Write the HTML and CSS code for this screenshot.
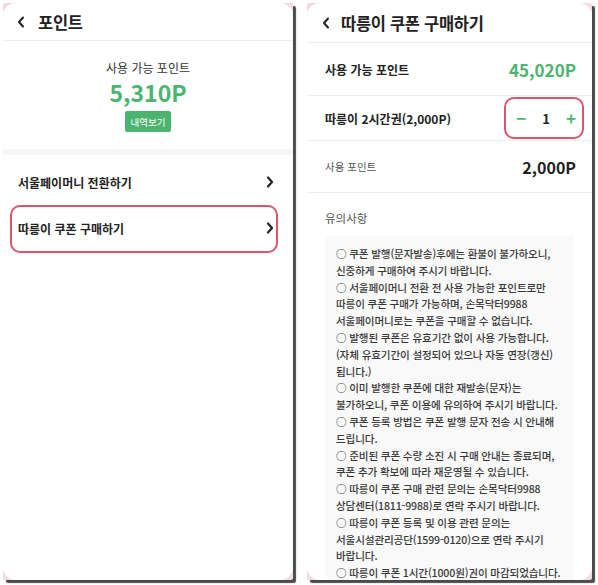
FILE: index.html
```html
<!DOCTYPE html>
<html lang="ko">
<head>
<meta charset="utf-8">
<link rel="stylesheet" href="styles.css">
</head>
<body>
<div class="stage">
  <div class="frame frame-left">
    <div class="card">
      <div class="header">
        <svg class="back" width="8" height="12" viewBox="0 0 8 12"><polyline points="6,1.5 2,6 6,10.5" fill="none" stroke="#222" stroke-width="2" stroke-linecap="round" stroke-linejoin="round"/></svg>
        <span class="title">포인트</span>
      </div>
      <div class="summary">
        <div class="summary-label">사용 가능 포인트</div>
        <div class="summary-value">5,310P</div>
        <div class="history-btn">내역보기</div>
      </div>
      <div class="band"></div>
      <div class="menu">
        <div class="menu-row">
          <span>서울페이머니 전환하기</span>
          <svg width="8" height="12" viewBox="0 0 8 12"><polyline points="2,1.5 6,6 2,10.5" fill="none" stroke="#222" stroke-width="2.2" stroke-linecap="round" stroke-linejoin="round"/></svg>
        </div>
        <div class="menu-row">
          <span>따릉이 쿠폰 구매하기</span>
          <svg width="8" height="12" viewBox="0 0 8 12"><polyline points="2,1.5 6,6 2,10.5" fill="none" stroke="#222" stroke-width="2.2" stroke-linecap="round" stroke-linejoin="round"/></svg>
          <div class="highlight hl-menu"></div>
        </div>
      </div>
    </div>
  </div>
  <div class="frame frame-right">
    <div class="card">
      <div class="header header-r">
        <svg class="back" width="8" height="12" viewBox="0 0 8 12"><polyline points="6,1.5 2,6 6,10.5" fill="none" stroke="#222" stroke-width="2" stroke-linecap="round" stroke-linejoin="round"/></svg>
        <span class="title">따릉이 쿠폰 구매하기</span>
      </div>
      <div class="row row-a">
        <span class="row-label">사용 가능 포인트</span>
        <span class="row-green">45,020P</span>
      </div>
      <div class="row row-b">
        <span class="row-label">따릉이 2시간권(2,000P)</span>
        <div class="stepper">
          <span class="step-btn">−</span>
          <span class="step-num">1</span>
          <span class="step-btn">+</span>
          <div class="highlight hl-step"></div>
        </div>
      </div>
      <div class="row row-c">
        <span class="row-small">사용 포인트</span>
        <span class="row-total">2,000P</span>
      </div>
      <div class="notice">
        <div class="notice-title">유의사항</div>
        <div class="notice-box">
          ○ 쿠폰 발행(문자발송)후에는 환불이 불가하오니,<br>
          신중하게 구매하여 주시기 바랍니다.<br>
          ○ 서울페이머니 전환 전 사용 가능한 포인트로만<br>
          따릉이 쿠폰 구매가 가능하며, 손목닥터9988<br>
          서울페이머니로는 쿠폰을 구매할 수 없습니다.<br>
          ○ 발행된 쿠폰은 유효기간 없이 사용 가능합니다.<br>
          (자체 유효기간이 설정되어 있으나 자동 연장(갱신)<br>
          됩니다.)<br>
          ○ 이미 발행한 쿠폰에 대한 재발송(문자)는<br>
          불가하오니, 쿠폰 이용에 유의하여 주시기 바랍니다.<br>
          ○ 쿠폰 등록 방법은 쿠폰 발행 문자 전송 시 안내해<br>
          드립니다.<br>
          ○ 준비된 쿠폰 수량 소진 시 구매 안내는 종료되며,<br>
          쿠폰 추가 확보에 따라 재운영될 수 있습니다.<br>
          ○ 따릉이 쿠폰 구매 관련 문의는 손목닥터9988<br>
          상담센터(1811-9988)로 연락 주시기 바랍니다.<br>
          ○ 따릉이 쿠폰 등록 및 이용 관련 문의는<br>
          서울시설관리공단(1599-0120)으로 연락 주시기<br>
          바랍니다.<br>
          ○ 따릉이 쿠폰 1시간(1000원)권이 마감되었습니다.
        </div>
      </div>
    </div>
  </div>
</div>
</body>
</html>
```
FILE: styles.css
```css
* { box-sizing: border-box; }
html, body { margin: 0; padding: 0; background: #fff; }
body {
  font-family: "Noto Sans CJK KR", "Noto Sans", sans-serif;
  color: #222;
  width: 598px;
  height: 585px;
  overflow: hidden;
}
.stage {
  display: flex;
  height: 585px;
  padding: 3px 0 0 3px;
  gap: 14px;
}
.frame {
  height: 577px;
  background: #f1dde1;
  box-shadow: 3px 3px 1px #4a4a4a;
  border-radius: 2px;
}
.frame-left { width: 290px; }
.frame-right { width: 285px; }
.card {
  background: #fff;
  height: 100%;
  border-radius: 13px;
  overflow: hidden;
  display: flex;
  flex-direction: column;
}
.header {
  height: 38px;
  flex: none;
  border-bottom: 1px solid #ececec;
  display: flex;
  align-items: center;
  padding-left: 14px;
  gap: 13px;
}
.header-r { height: 40px; padding-left: 15px; gap: 11px; }
.title { font-size: 16.5px; font-weight: 700; letter-spacing: -0.3px; }
.summary {
  display: flex;
  flex-direction: column;
  align-items: center;
  padding-top: 18px;
  height: 108px;
  flex: none;
}
.summary-label { font-size: 12px; color: #333; line-height: 18px; }
.summary-value {
  font-size: 23px;
  font-weight: 700;
  color: #4bb56f;
  line-height: 28px;
  margin-top: 1px;
}
.history-btn {
  margin-top: 5px;
  background: #4bb56f;
  color: #fff;
  font-size: 9.5px;
  width: 46px;
  height: 21px;
  border-radius: 2px;
  display: flex;
  align-items: center;
  justify-content: center;
}
.band { height: 6px; background: #f6f6f6; flex: none; }
.menu { padding-top: 4px; }
.menu-row {
  position: relative;
  height: 46px;
  display: flex;
  align-items: center;
  justify-content: space-between;
  padding: 0 19px 0 15px;
  font-size: 12px;
  font-weight: 700;
  color: #222;
}
.highlight {
  position: absolute;
  border: 2.5px solid #d8566e;
  border-radius: 10px;
}
.hl-menu { left: 7px; right: 15px; top: 0; bottom: -2px; }
.row {
  display: flex;
  align-items: center;
  justify-content: space-between;
  padding: 0 16px 0 18px;
  border-bottom: 1px solid #ededed;
  flex: none;
}
.row-a { height: 53px; }
.row-b { height: 45px; }
.row-c { height: 52px; }
.row-label { font-size: 12px; font-weight: 700; }
.row-green { font-size: 17px; font-weight: 700; color: #4bb56f; }
.stepper {
  position: relative;
  display: flex;
  align-items: center;
  gap: 16px;
}
.step-btn { color: #4bb56f; font-size: 17px; font-weight: 700; line-height: 20px; }
.step-num { font-size: 13px; font-weight: 700; }
.hl-step { left: -12px; right: -8px; top: -11px; bottom: -11px; }
.row-small { font-size: 10.5px; color: #555; }
.row-total { font-size: 16px; font-weight: 700; color: #222; }
.notice { padding: 15px 18px 0 18px; }
.notice-title { font-size: 11.5px; color: #555; line-height: 20px; }
.notice-box {
  margin-top: 8px;
  background: #f9f9f9;
  border-radius: 4px;
  padding: 10px 6px 8px 11px;
  font-size: 10.6px;
  font-weight: 500;
  line-height: 16.8px;
  color: #383838;
  letter-spacing: -0.15px;
  white-space: nowrap;
}
```
